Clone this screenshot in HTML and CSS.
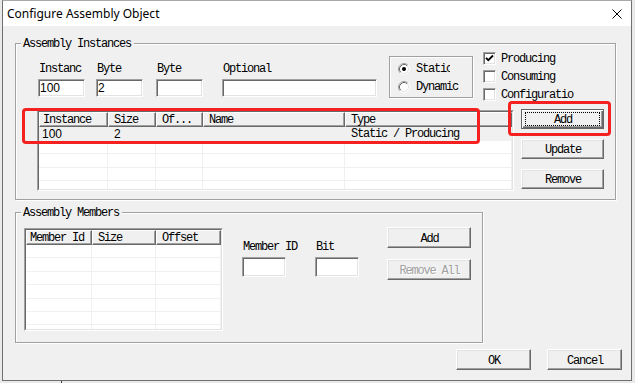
FILE: index.html
```html
<!DOCTYPE html>
<html>
<head>
<meta charset="utf-8">
<title>Configure Assembly Object</title>
<link rel="stylesheet" href="styles.css">
</head>
<body>
<div class="window">
  <div class="titlebar">
    <span class="title">Configure Assembly Object</span>
    <svg class="close" width="10" height="10" viewBox="0 0 10 10"><path d="M0.5 0.5L9.5 9.5M9.5 0.5L0.5 9.5" stroke="#000" stroke-width="1" fill="none"/></svg>
  </div>
  <div class="client">
    <div class="group group-inst">
      <div class="legend">Assembly Instances</div>
      <div class="inst-top">
        <div class="field f-inst"><div class="lbl">Instanc</div><div class="edit">100</div></div>
        <div class="field f-byte1"><div class="lbl">Byte</div><div class="edit">2</div></div>
        <div class="field f-byte2"><div class="lbl">Byte</div><div class="edit"></div></div>
        <div class="field f-opt"><div class="lbl">Optional</div><div class="edit"></div></div>
        <div class="radiobox">
          <div class="radio">
            <svg width="12" height="12" viewBox="0 0 12 12"><circle cx="6" cy="6" r="5" fill="#fff"/><path d="M9.89 2.11A5.5 5.5 0 0 0 2.11 9.89" stroke="#a0a0a0" fill="none"/><path d="M9.89 2.11A5.5 5.5 0 0 1 2.11 9.89" stroke="#fff" fill="none"/><path d="M9.18 2.82A4.5 4.5 0 0 0 2.82 9.18" stroke="#696969" fill="none"/><path d="M9.18 2.82A4.5 4.5 0 0 1 2.82 9.18" stroke="#e3e3e3" fill="none"/><circle cx="6" cy="6" r="2" fill="#000"/></svg>
            <span class="rlabel clip">Static</span>
          </div>
          <div class="radio">
            <svg width="12" height="12" viewBox="0 0 12 12"><circle cx="6" cy="6" r="5" fill="#fff"/><path d="M9.89 2.11A5.5 5.5 0 0 0 2.11 9.89" stroke="#a0a0a0" fill="none"/><path d="M9.89 2.11A5.5 5.5 0 0 1 2.11 9.89" stroke="#fff" fill="none"/><path d="M9.18 2.82A4.5 4.5 0 0 0 2.82 9.18" stroke="#696969" fill="none"/><path d="M9.18 2.82A4.5 4.5 0 0 1 2.82 9.18" stroke="#e3e3e3" fill="none"/></svg>
            <span class="rlabel">Dynamic</span>
          </div>
        </div>
        <div class="checks">
          <div class="check"><span class="cbox"><svg width="9" height="9" viewBox="0 0 9 9"><path d="M1 3.8L3.3 6.2L8 1.5" stroke="#000" stroke-width="1.8" fill="none"/></svg></span><span>Producing</span></div>
          <div class="check"><span class="cbox"></span><span>Consuming</span></div>
          <div class="check"><span class="cbox"></span><span>Configuratio</span></div>
        </div>
      </div>
      <div class="inst-bottom">
        <div class="lv lv-inst">
          <div class="lv-in">
            <div class="lv-head">
              <span class="hc c1">Instance</span><span class="hc c2">Size</span><span class="hc c3">Of...</span><span class="hc c4">Name</span><span class="hc c5">Type</span>
            </div>
            <div class="lv-row sel"><span class="bc c1 num">100</span><span class="bc c2 num">2</span><span class="bc c3"></span><span class="bc c4"></span><span class="bc c5">Static / Producing</span></div>
            <div class="lv-row"><span class="bc c1"></span><span class="bc c2"></span><span class="bc c3"></span><span class="bc c4"></span><span class="bc c5"></span></div>
            <div class="lv-row"><span class="bc c1"></span><span class="bc c2"></span><span class="bc c3"></span><span class="bc c4"></span><span class="bc c5"></span></div>
            <div class="lv-row"><span class="bc c1"></span><span class="bc c2"></span><span class="bc c3"></span><span class="bc c4"></span><span class="bc c5"></span></div>
            <div class="lv-row"><span class="bc c1"></span><span class="bc c2"></span><span class="bc c3"></span><span class="bc c4"></span><span class="bc c5"></span></div>
          </div>
        </div>
        <div class="btncol">
          <div class="btn btn-default"><span class="focus">Add</span></div>
          <div class="btn">Update</div>
          <div class="btn">Remove</div>
        </div>
      </div>
    </div>

    <div class="group group-mem">
      <div class="legend">Assembly Members</div>
      <div class="mem-row">
        <div class="lv lv-mem">
          <div class="lv-in">
            <div class="lv-head">
              <span class="hc m1">Member Id</span><span class="hc m2">Size</span><span class="hc m3">Offset</span>
            </div>
            <div class="lv-row"><span class="bc m1"></span><span class="bc m2"></span><span class="bc m3"></span></div>
            <div class="lv-row"><span class="bc m1"></span><span class="bc m2"></span><span class="bc m3"></span></div>
            <div class="lv-row"><span class="bc m1"></span><span class="bc m2"></span><span class="bc m3"></span></div>
            <div class="lv-row"><span class="bc m1"></span><span class="bc m2"></span><span class="bc m3"></span></div>
            <div class="lv-row"><span class="bc m1"></span><span class="bc m2"></span><span class="bc m3"></span></div>
            <div class="lv-row"><span class="bc m1"></span><span class="bc m2"></span><span class="bc m3"></span></div>
            <div class="lv-row"><span class="bc m1"></span><span class="bc m2"></span><span class="bc m3"></span></div>
          </div>
        </div>
        <div class="field mem-f1"><div class="lbl">Member ID</div><div class="edit tall"></div></div>
        <div class="field mem-f2"><div class="lbl">Bit</div><div class="edit tall"></div></div>
        <div class="mem-btns">
          <div class="btn">Add</div>
          <div class="btn disabled">Remove All</div>
        </div>
      </div>
    </div>

    <div class="footer">
      <div class="btn">OK</div>
      <div class="btn">Cancel</div>
    </div>
  </div>
</div>
<div class="below"></div>
<div class="annot a1"></div>
<div class="annot a2"></div>
</body>
</html>
```

FILE: styles.css
```css
* { box-sizing: border-box; }
html, body { margin: 0; padding: 0; }
body {
  width: 635px;
  height: 383px;
  overflow: hidden;
  background: #e9e9e9;
  font-family: "Liberation Mono", "DejaVu Sans Mono", monospace;
  font-size: 12px;
  letter-spacing: -1.2px;
  line-height: 12px;
  color: #000;
}
.window {
  margin-left: 2px;
  width: 630px;
  height: 381px;
  border: 1px solid #6f6f6f;
  border-top-color: #a8a8a8;
  background: #f0f0f0;
  display: flex;
  flex-direction: column;
}
.titlebar {
  flex: none;
  height: 25px;
  background: #fff;
  display: flex;
  align-items: center;
  justify-content: space-between;
  padding: 0 9px 0 4px;
}
.title {
  font-family: "Noto Sans", sans-serif;
  font-size: 12px;
  letter-spacing: 0;
  line-height: 16px;
}
.close { display: block; }
.client {
  flex: 1;
  display: flex;
  flex-direction: column;
  padding: 0 9px 0 12px;
}
.group {
  border: 1px solid #a0a0a0;
  box-shadow: inset 1px 1px 0 #fff, 1px 1px 0 #fff;
}
.group-inst { margin-top: 17px; width: 601px; height: 157px; }
.group-mem { margin-top: 12px; width: 468px; height: 131px; }
.legend {
  margin: -7px 0 0 5px;
  padding: 1px 3px 0 2px;
  width: max-content;
  height: 12px;
  background: #f0f0f0;
  white-space: nowrap;
}
.inst-top { display: flex; align-items: flex-start; margin-top: 3px; }
.field { display: flex; flex-direction: column; margin-top: 10px; }
.lbl { height: 12px; padding: 1px 0 0 1px; margin-bottom: 5px; white-space: nowrap; }
.edit {
  height: 18px;
  background: #fff;
  border: 1px solid;
  border-color: #a0a0a0 #fff #fff #a0a0a0;
  box-shadow: inset 1px 1px 0 #696969, inset -1px -1px 0 #e3e3e3;
  display: flex;
  align-items: center;
  padding-left: 1px;
  font-family: "Liberation Sans", Arial, sans-serif;
  font-size: 12px;
  letter-spacing: 0;
}
.edit.tall { height: 20px; }
.f-inst { margin-left: 22px; width: 47px; }
.f-byte1 { margin-left: 11px; width: 47px; }
.f-byte2 { margin-left: 13px; width: 47px; }
.f-opt { margin-left: 19px; width: 155px; }
.radiobox {
  margin: 4px 0 0 12px;
  width: 84px;
  height: 42px;
  border: 1px solid #a0a0a0;
  box-shadow: inset 1px 1px 0 #fff, 1px 1px 0 #fff;
  padding: 6px 0 0 8px;
  display: flex;
  flex-direction: column;
  gap: 6px;
}
.radio { display: flex; align-items: center; height: 12px; gap: 6px; }
.radio svg { flex: none; display: block; }
.rlabel { white-space: nowrap; }
.rlabel.clip { width: 34px; overflow: hidden; }
.checks { margin-left: 10px; display: flex; flex-direction: column; gap: 5px; }
.check { display: flex; align-items: center; height: 13px; gap: 5px; white-space: nowrap; }
.cbox {
  flex: none;
  width: 13px;
  height: 13px;
  background: #fff;
  border: 1px solid;
  border-color: #a0a0a0 #fff #fff #a0a0a0;
  box-shadow: inset 1px 1px 0 #696969, inset -1px -1px 0 #e3e3e3;
  display: flex;
  align-items: center;
  justify-content: center;
}
.cbox svg { display: block; }

.inst-bottom { display: flex; align-items: flex-start; margin-top: 8px; }
.lv {
  border: 1px solid;
  border-color: #a0a0a0 #fff #fff #a0a0a0;
}
.lv-in {
  height: 100%;
  border: 1px solid;
  border-color: #696969 #e3e3e3 #e3e3e3 #696969;
  background: #fff;
  overflow: hidden;
}
.lv-inst { margin: 1px 0 0 21px; width: 477px; height: 81px; }
.lv-mem { margin: 1px 0 0 8px; width: 199px; height: 103px; }
.lv-head { display: flex; height: 15px; background: #f0f0f0; }
.hc {
  flex: none;
  height: 15px;
  border: 1px solid;
  border-color: #fff #696969 #696969 #fff;
  box-shadow: inset -1px -1px 0 #a0a0a0;
  padding: 1px 0 0 5px;
  white-space: nowrap;
  overflow: hidden;
}
.hc.c1, .hc.m1 { padding-left: 3px; }
.lv-row { display: flex; height: 13.5px; border-bottom: 1px solid #f0f0f0; }
.lv-mem .lv-row { height: 13.4px; }
.lv-row.sel { background: #f0f0f0; }
.bc {
  flex: none;
  height: 100%;
  border-right: 1px solid #f0f0f0;
  padding: 1px 0 0 6px;
  white-space: nowrap;
  line-height: 13px;
}
.bc.num {
  padding-left: 3px;
  font-family: "Liberation Sans", Arial, sans-serif;
  font-size: 12px;
  letter-spacing: 0;
}
.bc.c2.num { padding-left: 6px; }
.c1 { width: 69px; }
.c2 { width: 48px; }
.c3 { width: 47px; }
.c4 { width: 142px; }
.c5 { flex: 1; }
.m1 { width: 66px; }
.m2 { width: 64px; }
.m3 { flex: 1; }

.btncol { margin-left: 7px; display: flex; flex-direction: column; gap: 10px; }
.btncol .btn { width: 83px; height: 20px; }
.btn {
  display: flex;
  align-items: center;
  justify-content: center;
  padding: 2px 0 0 1px;
  background: #f0f0f0;
  border: 1px solid;
  border-color: #fff #696969 #696969 #fff;
  box-shadow: inset -1px -1px 0 #a0a0a0, inset 1px 1px 0 #e3e3e3;
  white-space: nowrap;
}
.btn.btn-default {
  border-color: #646464;
  box-shadow: inset 1px 1px 0 #fff, inset -1px -1px 0 #696969, inset -2px -2px 0 #a0a0a0;
  align-items: stretch;
  padding: 0;
}
.focus {
  flex: 1;
  margin: 2px 3px;
  padding: 2px 0 0 1px;
  border: 1px dotted #000;
  display: flex;
  align-items: center;
  justify-content: center;
}
.btn.disabled { color: #a0a0a0; text-shadow: 1px 1px 0 #fff; }

.mem-row { display: flex; align-items: flex-start; margin-top: 9px; }
.mem-f1 { margin: 13px 0 0 19px; width: 44px; }
.mem-f2 { margin: 13px 0 0 29px; width: 44px; }
.mem-btns { margin-left: 28px; display: flex; flex-direction: column; gap: 11px; }
.mem-btns .btn { width: 84px; height: 21px; }

.footer { margin-top: 6px; display: flex; justify-content: flex-end; gap: 16px; }
.footer .btn { width: 75px; height: 21px; }

.below { margin-left: 61px; width: 1px; height: 2px; background: #3c3c3c; }

.annot {
  position: absolute;
  border: 3px solid #f52020;
  border-radius: 4px;
}
.a1 { left: 22px; top: 108px; width: 458px; height: 36px; }
.a2 { left: 508px; top: 101px; width: 103px; height: 35px; }
```
